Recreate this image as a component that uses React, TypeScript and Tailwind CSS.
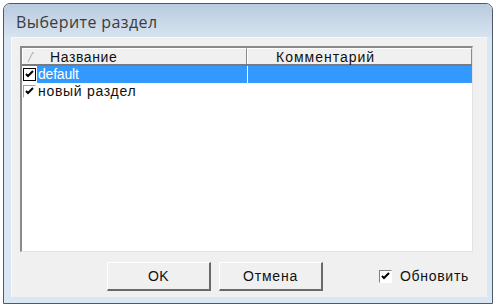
import React from "react";

const font = { fontFamily: '"Liberation Sans", Arial, sans-serif' };

const RowCheck: React.FC<{ focused?: boolean }> = ({ focused }) => (
  <span
    className={
      focused
        ? "w-[13px] h-[13px] border border-black bg-white flex items-center justify-center shrink-0"
        : "w-[13px] h-[13px] border border-t-[#a0a0a0] border-l-[#a0a0a0] border-b-white border-r-white bg-white flex items-center justify-center shrink-0"
    }
  >
    <svg width="9" height="9" viewBox="0 0 9 9">
      <path d="M1 4 L3 6 L8 1" stroke="black" strokeWidth="2" fill="none" />
    </svg>
  </span>
);

const Button: React.FC<{ label: string; wide?: boolean }> = ({ label, wide }) => (
  <button
    className={
      "w-[104px] h-[29px] bg-[#f0f0f0] border-t border-l border-white border-b-2 border-r-2 border-b-[#696969] border-r-[#696969] text-[14px] text-[#111] flex items-center justify-center " +
      (wide ? "tracking-[0.8px]" : "tracking-[0.3px]")
    }
  >
    {label}
  </button>
);

export default function App() {
  return (
    <div className="w-[498px] h-[306px] bg-white pt-[3px] pl-[3px]" style={font}>
      <div className="w-[490px] h-[301px] border border-[#4f5a68] rounded-t-[7px] bg-[#dae6f3] flex flex-col overflow-hidden">
        <div className="h-[33px] bg-gradient-to-b from-[#b9cbdf] to-[#d7e3f0] pl-[12px] flex items-center shrink-0">
          <span
            className="text-[16px] text-[#3c3c3c] pt-[2px] tracking-[0.4px]"
            style={{ fontFamily: '"Open Sans", "Noto Sans", sans-serif' }}
          >
            Выберите раздел
          </span>
        </div>
        <div className="ml-[7px] mr-[5px] mb-[6px] flex-1 bg-[#f0f0f0] border-t border-l border-[#f8f8f8] flex flex-col">
          <div className="ml-[8px] mt-[8px] w-[453px] h-[206px] bg-white border-t-2 border-l-2 border-t-[#8a8a8a] border-l-[#8a8a8a] border-b border-r border-b-[#e3e3e3] border-r-[#e3e3e3] flex flex-col">
            <div className="h-[18px] flex text-[14px] text-[#111] bg-[#f0f0f0] border-b-2 border-b-[#7a7a7a] shrink-0">
              <div className="w-[225px] border-t border-l border-white border-r border-r-[#8a8a8a] flex items-center relative">
                <svg className="absolute left-[4px] top-[2px]" width="8" height="12" viewBox="0 0 8 12">
                  <path d="M1 11 L6 1" stroke="#a8a8a8" strokeWidth="1" fill="none" />
                  <path d="M6 1 L7 3" stroke="#d0d0d0" strokeWidth="1" fill="none" />
                </svg>
                <span className="pl-[27px] leading-none tracking-[0.6px]">Название</span>
              </div>
              <div className="flex-1 border-t border-l border-white border-r border-r-[#8a8a8a] flex items-center">
                <span className="pl-[28px] leading-none tracking-[1px]">Комментарий</span>
              </div>
            </div>
            <div className="h-[17px] shrink-0 flex items-center text-[14px] leading-[17px]">
              <div className="w-[15px] pl-[1px] flex items-center">
                <RowCheck focused />
              </div>
              <div className="w-[210px] h-full bg-[#3399ff] text-white flex items-center pl-[1px] tracking-[-0.2px]">
                default
              </div>
              <div className="w-[1px] h-full bg-white" />
              <div className="flex-1 h-full bg-[#3399ff]" />
            </div>
            <div className="h-[17px] shrink-0 flex items-center text-[14px] leading-[17px] text-[#111]">
              <div className="w-[15px] pl-[1px] flex items-center">
                <RowCheck />
              </div>
              <span className="pl-[1px] tracking-[0.7px]">новый раздел</span>
            </div>
          </div>
          <div className="flex items-center mt-[10px] pl-[95px] gap-[8px]">
            <Button label="OK" />
            <Button label="Отмена" wide />
            <div className="ml-[48px] flex items-center gap-[8px]">
              <span className="w-[13px] h-[13px] border border-t-[#808080] border-l-[#808080] border-b-white border-r-white bg-white flex items-center justify-center">
                <svg width="9" height="9" viewBox="0 0 9 9">
                  <path d="M1 4 L3 6 L8 1" stroke="black" strokeWidth="2" fill="none" />
                </svg>
              </span>
              <span className="text-[14px] text-[#111] tracking-[0.7px]">Обновить</span>
            </div>
          </div>
        </div>
      </div>
    </div>
  );
}
